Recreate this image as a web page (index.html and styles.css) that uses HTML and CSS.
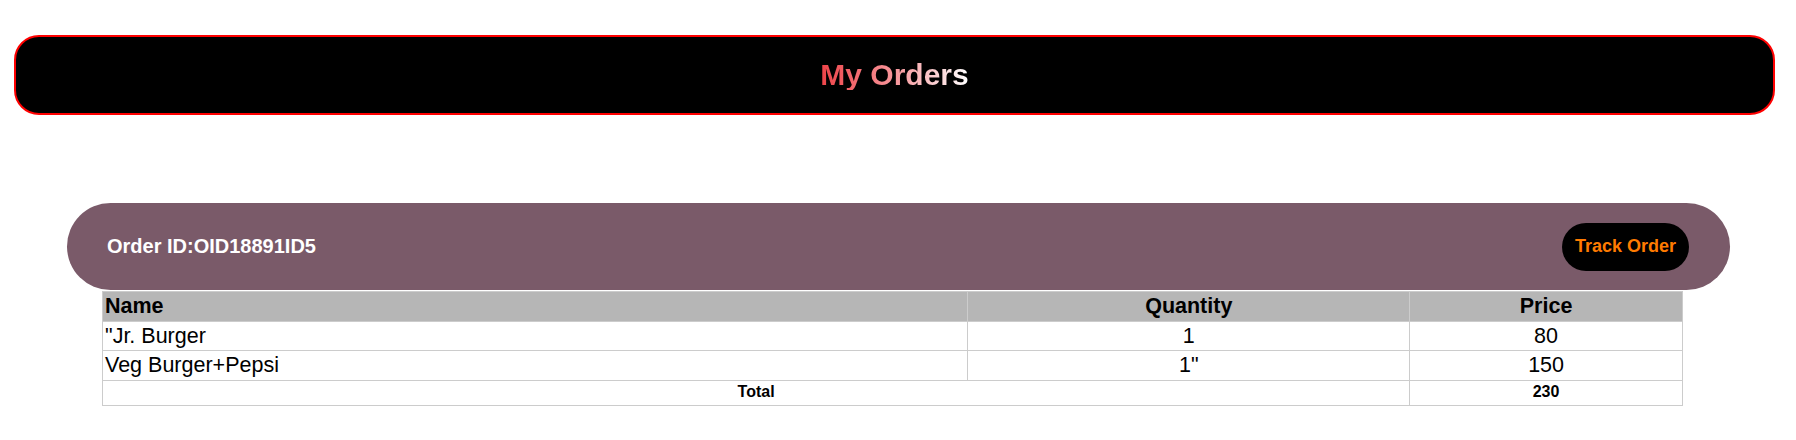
FILE: index.html
```html
<!DOCTYPE html>
<html lang="en">
<head>
<meta charset="utf-8">
<title>My Orders</title>
<link rel="stylesheet" href="styles.css">
</head>
<body>
<header class="header">
  <h1 class="title">My Orders</h1>
</header>
<section class="order">
  <div class="order-bar">
    <span class="order-id">Order ID:OID18891ID5</span>
    <button class="track-btn">Track Order</button>
  </div>
  <table class="items">
    <colgroup>
      <col class="col-name">
      <col class="col-qty">
      <col class="col-price">
    </colgroup>
    <thead>
      <tr>
        <th class="left">Name</th>
        <th>Quantity</th>
        <th>Price</th>
      </tr>
    </thead>
    <tbody>
      <tr>
        <td class="left">"Jr. Burger</td>
        <td>1</td>
        <td>80</td>
      </tr>
      <tr>
        <td class="left">Veg Burger+Pepsi</td>
        <td>1"</td>
        <td>150</td>
      </tr>
      <tr class="total">
        <td colspan="2">Total</td>
        <td>230</td>
      </tr>
    </tbody>
  </table>
</section>
</body>
</html>
```

FILE: styles.css
```css
body {
  margin: 8px;
  font-family: "Liberation Sans", Arial, sans-serif;
  background: #fff;
  color: #000;
}

.header {
  box-sizing: border-box;
  height: 80px;
  margin: 27px 13px 0 6px;
  border: 2px solid #ff0000;
  border-radius: 25px;
  background: #000;
  display: flex;
  align-items: center;
  justify-content: center;
}

.title {
  margin: 0;
  font-size: 30px;
  font-weight: bold;
  line-height: 1;
  background: linear-gradient(90deg, #ee4348 0%, #f7959a 50%, #ffffff 100%);
  -webkit-background-clip: text;
  background-clip: text;
  color: transparent;
}

.order {
  margin-top: 88px;
}

.order-bar {
  box-sizing: border-box;
  height: 87px;
  margin: 0 58px 0 59px;
  padding: 0 41px 0 40px;
  border-radius: 44px;
  background: #7a5a69;
  display: flex;
  align-items: center;
  justify-content: space-between;
}

.order-id {
  color: #fff;
  font-size: 20px;
  font-weight: bold;
}

.track-btn {
  box-sizing: border-box;
  height: 48px;
  width: 127px;
  padding: 0;
  border: none;
  border-radius: 24px;
  background: #000;
  color: #ff7b00;
  font-family: "Liberation Sans", Arial, sans-serif;
  font-size: 18px;
  font-weight: bold;
}

.items {
  margin: 1px 0 0 94px;
  width: 1581px;
  border-collapse: collapse;
  font-size: 21.5px;
}

.col-name { width: 866px; }
.col-qty { width: 442px; }
.col-price { width: 273px; }

.items th,
.items td {
  border: 1px solid #cccccc;
  padding: 2px;
  text-align: center;
  line-height: 1.15;
}

.items th {
  background: #b6b6b6;
  font-weight: bold;
}

.items .left {
  text-align: left;
}

.items .total td {
  font-size: 16px;
  font-weight: bold;
  padding: 2px 2px 3px;
}
```
